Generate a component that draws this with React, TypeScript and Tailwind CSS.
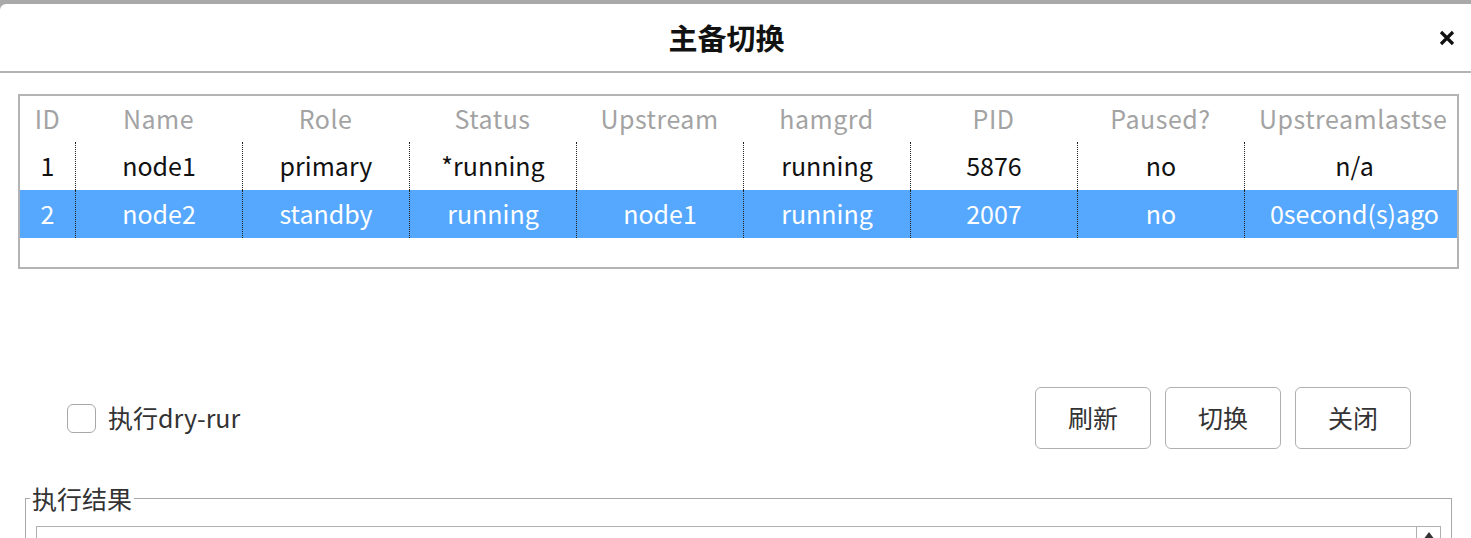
import React from "react";

const cols = [
  { key: "ID", w: "w-[55px]" },
  { key: "Name", w: "w-[167px]" },
  { key: "Role", w: "w-[167px]" },
  { key: "Status", w: "w-[167px]" },
  { key: "Upstream", w: "w-[167px]" },
  { key: "hamgrd", w: "w-[167px]" },
  { key: "PID", w: "w-[167px]" },
  { key: "Paused?", w: "w-[167px]" },
  { key: "Upstreamlastseen", w: "w-[220px]" },
];

const rows = [
  ["1", "node1", "primary", "*running", "", "running", "5876", "no", "n/a"],
  ["2", "node2", "standby", "running", "node1", "running", "2007", "no", "0second(s)ago"],
];

export default function App() {
  return (
    <div
      className="w-[1471px] h-[538px] overflow-hidden bg-[#a9a9a9] flex flex-col"
      style={{ fontFamily: '"Noto Sans CJK SC", "Noto Sans", sans-serif' }}
    >
      <div className="h-[4px] shrink-0" />
      <div className="h-[2px] shrink-0 bg-[#656565] ml-[6px]" />
      <div className="flex-1 bg-white rounded-tl-[6px] -mt-[2px] flex flex-col min-h-0">
        {/* title bar */}
        <div className="h-[69px] shrink-0 border-b-2 border-[#b4b4b4] flex items-center justify-center relative pr-[18px]">
          <span className="text-[29px] font-bold text-[#111]">主备切换</span>
          <svg
            className="absolute right-[16px] top-[26px]"
            width="16"
            height="16"
            viewBox="0 0 16 16"
          >
            <path d="M2 2 L14 14 M14 2 L2 14" stroke="#111" strokeWidth="3.2" />
          </svg>
        </div>

        {/* table */}
        <div className="mt-[21px] ml-[18px] mr-[12px] h-[175px] border-2 border-[#b4b4b4] overflow-hidden shrink-0">
          <div className="flex h-[46px] text-[25px] text-[#a3a3a3] whitespace-nowrap tracking-[0.5px]">
            {cols.map((c, i) =>
              i === cols.length - 1 ? (
                <div key={c.key} className={`${c.w} shrink-0 flex items-center pl-[15px]`}>
                  <span className="block w-[188px] overflow-hidden">{c.key}</span>
                </div>
              ) : (
                <div
                  key={c.key}
                  className={`${c.w} shrink-0 flex items-center justify-center overflow-hidden`}
                >
                  {c.key}
                </div>
              )
            )}
          </div>
          {rows.map((r, ri) => (
            <div
              key={ri}
              className={`flex h-[48px] text-[25px] whitespace-nowrap ${
                ri === 1 ? "bg-[#56a8ff] text-white" : "text-[#111]"
              }`}
            >
              {r.map((v, ci) => (
                <div
                  key={ci}
                  className={`${cols[ci].w} shrink-0 flex items-center justify-center overflow-hidden ${
                    ci > 0 ? "border-l border-dotted border-[#222]" : ""
                  }`}
                >
                  {v}
                </div>
              ))}
            </div>
          ))}
        </div>

        {/* controls row */}
        <div className="mt-[118px] flex items-center justify-between pl-[67px] pr-[60px] shrink-0">
          <label className="flex items-center gap-[12px] text-[25px] text-[#333]">
            <span className="w-[29px] h-[29px] rounded-[6px] border border-[#a8a8a8] bg-white inline-block" />
            <span>执行dry-rur</span>
          </label>
          <div className="flex gap-[14px]">
            {["刷新", "切换", "关闭"].map((b) => (
              <button
                key={b}
                className="w-[116px] h-[62px] rounded-[6px] border border-[#b0b0b0] bg-white text-[25px] text-[#333] flex items-center justify-center"
              >
                {b}
              </button>
            ))}
          </div>
        </div>

        {/* result group */}
        <fieldset className="mt-[34px] ml-[25px] w-[1427px] shrink-0 border border-[#a8a8a8] pl-[4px] pr-[10px] h-[120px]">
          <legend className="px-[2px] text-[25px] leading-[30px] text-[#333]">执行结果</legend>
          <div className="mt-[13px] ml-[6px] h-[60px] border border-[#b0b0b0] flex">
            <div className="flex-1" />
            <div className="w-[24px] border-l border-[#b0b0b0] flex justify-center pt-[5px]">
              <svg width="12" height="8" viewBox="0 0 12 8">
                <path d="M6 0 L12 8 L0 8 Z" fill="#333" />
              </svg>
            </div>
          </div>
        </fieldset>
      </div>
    </div>
  );
}
